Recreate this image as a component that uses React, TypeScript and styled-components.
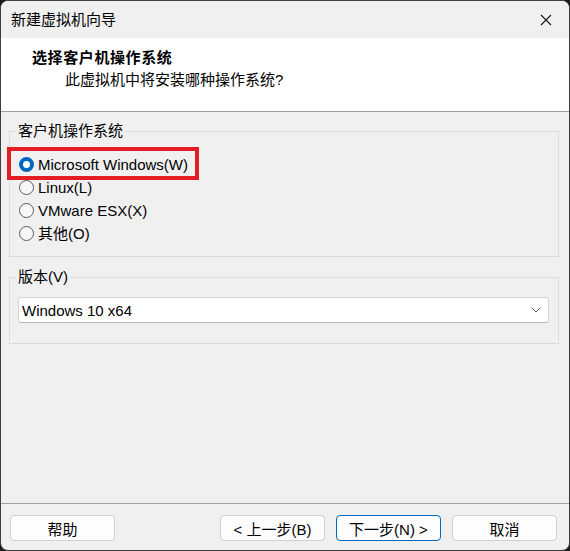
import React, { useState } from "react";
import styled, { createGlobalStyle } from "styled-components";

const GlobalStyle = createGlobalStyle`
  html, body {
    margin: 0;
    padding: 0;
    background: #1b1b1b;
  }
  body {
    font-family: "Liberation Sans", "Noto Sans CJK SC", sans-serif;
    font-size: 15px;
    color: #000;
  }
  * {
    box-sizing: border-box;
  }
`;

const OS_OPTIONS = [
  { id: "win", label: "Microsoft Windows(W)" },
  { id: "linux", label: "Linux(L)" },
  { id: "esx", label: "VMware ESX(X)" },
  { id: "other", label: "其他(O)" },
];

export default function App() {
  const [os, setOs] = useState("win");

  return (
    <>
      <GlobalStyle />
      <Window>
        <TitleBar>
          <TitleText>新建虚拟机向导</TitleText>
          <CloseButton aria-label="关闭">
            <svg width="12" height="12" viewBox="0 0 12 12">
              <path d="M1 1 L11 11 M11 1 L1 11" stroke="#1a1a1a" strokeWidth="1.1" fill="none" />
            </svg>
          </CloseButton>
        </TitleBar>

        <Header>
          <HeaderTitle>选择客户机操作系统</HeaderTitle>
          <HeaderSub>此虚拟机中将安装哪种操作系统?</HeaderSub>
        </Header>

        <Body>
          <Group>
            <Legend>客户机操作系统</Legend>
            <RadioList>
              {OS_OPTIONS.map((o, i) => (
                <RadioRow key={o.id} onClick={() => setOs(o.id)}>
                  {i === 0 && <Highlight />}
                  <RadioDot $checked={os === o.id} />
                  <RadioText>{o.label}</RadioText>
                </RadioRow>
              ))}
            </RadioList>
          </Group>

          <Group $spaced>
            <Legend>版本(V)</Legend>
            <VersionBox>
              <Select>
                <span>Windows 10 x64</span>
                <svg width="10" height="6" viewBox="0 0 10 6">
                  <path d="M0.5 0.5 L5 5 L9.5 0.5" stroke="#5f5f5f" strokeWidth="1" fill="none" />
                </svg>
              </Select>
            </VersionBox>
          </Group>
        </Body>

        <Footer>
          <Button>帮助</Button>
          <NavButtons>
            <Button>&lt; 上一步(B)</Button>
            <Button $primary>下一步(N) &gt;</Button>
            <Button>取消</Button>
          </NavButtons>
        </Footer>
      </Window>
    </>
  );
}

const Window = styled.div`
  width: 570px;
  height: 551px;
  display: flex;
  flex-direction: column;
  background: #f0f0f0;
  border: 1px solid #3e3e3e;
  border-radius: 8px;
  overflow: hidden;
`;

const TitleBar = styled.div`
  height: 37px;
  display: flex;
  align-items: center;
  justify-content: space-between;
  padding: 1px 16px 0 10px;
  background: #f0f0f0;
`;

const TitleText = styled.div`
  font-size: 15px;
  line-height: 20px;
`;

const CloseButton = styled.div`
  display: flex;
  align-items: center;
  justify-content: center;
  width: 14px;
  height: 14px;
`;

const Header = styled.div`
  height: 74px;
  background: #ffffff;
  border-bottom: 1px solid #a0a0a0;
  padding: 10px 0 0 31px;
`;

const HeaderTitle = styled.div`
  font-weight: bold;
  font-size: 15px;
  line-height: 20px;
  letter-spacing: 0.6px;
`;

const HeaderSub = styled.div`
  font-size: 15px;
  line-height: 20px;
  margin-top: 2px;
  padding-left: 33px;
`;

const Body = styled.div`
  padding: 9px 10px 0 8px;
  display: flex;
  flex-direction: column;
`;

const Group = styled.fieldset<{ $spaced?: boolean }>`
  margin: ${(p) => (p.$spaced ? "10px" : "0")} 0 0 0;
  padding: 0;
  border: 1px solid #dcdcdc;
  min-width: 0;
`;

const Legend = styled.legend`
  margin-left: 6px;
  padding: 0 2px;
  font-size: 15px;
  line-height: 20px;
`;

const RadioList = styled.div`
  display: flex;
  flex-direction: column;
  padding: 12px 0 11px 9px;
`;

const RadioRow = styled.label`
  position: relative;
  display: flex;
  align-items: center;
  height: 23px;
  cursor: default;
`;

const Highlight = styled.span`
  position: absolute;
  left: -12px;
  top: -6px;
  width: 192px;
  height: 33px;
  border: 4px solid #e41d25;
  pointer-events: none;
`;

const RadioDot = styled.span<{ $checked: boolean }>`
  width: 15px;
  height: 15px;
  border-radius: 50%;
  flex: none;
  border: ${(p) => (p.$checked ? "4px solid #0067c0" : "1px solid #5c5c5c")};
  background: ${(p) => (p.$checked ? "#ffffff" : "#f7f7f7")};
  margin-right: 4px;
`;

const RadioText = styled.span`
  font-size: 15px;
  line-height: 20px;
  white-space: nowrap;
`;

const VersionBox = styled.div`
  padding: 10px 9px 20px 8px;
`;

const Select = styled.div`
  height: 26px;
  display: flex;
  align-items: center;
  justify-content: space-between;
  padding: 0 7px 0 3px;
  background: #ffffff;
  border: 1px solid #d6d6d6;
  border-bottom-color: #b8b8b8;
  border-radius: 3px;
  font-size: 15px;
`;

const Footer = styled.div`
  margin-top: auto;
  border-top: 1px solid #a0a0a0;
  padding: 11px 12px 9px 9px;
  display: flex;
  justify-content: space-between;
  align-items: center;
`;

const NavButtons = styled.div`
  display: flex;
  gap: 11px;
`;

const Button = styled.button<{ $primary?: boolean }>`
  width: 105px;
  height: 26px;
  padding: 0;
  font-family: "Liberation Sans", "Noto Sans CJK SC", sans-serif;
  font-size: 15px;
  color: #000;
  background: #fdfdfd;
  border: 1px solid ${(p) => (p.$primary ? "#0067c0" : "#d0d0d0")};
  border-radius: 4px;
`;
